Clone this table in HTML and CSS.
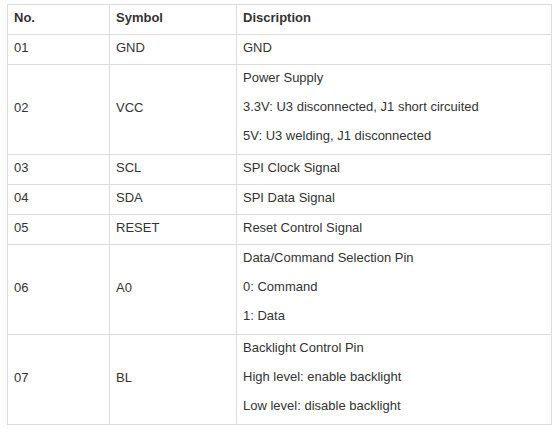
FILE: index.html
```html
<!DOCTYPE html>
<html>
<head>
<meta charset="utf-8">
<link rel="stylesheet" href="styles.css">
</head>
<body>
<div class="wrap">
<table class="pins">
  <colgroup>
    <col class="c-no">
    <col class="c-sym">
    <col class="c-desc">
  </colgroup>
  <thead>
    <tr><th>No.</th><th>Symbol</th><th>Discription</th></tr>
  </thead>
  <tbody>
    <tr><td>01</td><td>GND</td><td>GND</td></tr>
    <tr><td>02</td><td>VCC</td><td class="multi"><div class="ln">Power Supply</div><div class="ln">3.3V: U3 disconnected, J1 short circuited</div><div class="ln">5V: U3 welding, J1 disconnected</div></td></tr>
    <tr><td>03</td><td>SCL</td><td>SPI Clock Signal</td></tr>
    <tr><td>04</td><td>SDA</td><td>SPI Data Signal</td></tr>
    <tr><td>05</td><td>RESET</td><td>Reset Control Signal</td></tr>
    <tr><td>06</td><td>A0</td><td class="multi"><div class="ln">Data/Command Selection Pin</div><div class="ln">0: Command</div><div class="ln">1: Data</div></td></tr>
    <tr><td>07</td><td>BL</td><td class="multi"><div class="ln">Backlight Control Pin</div><div class="ln">High level: enable backlight</div><div class="ln">Low level: disable backlight</div></td></tr>
  </tbody>
</table>
</div>
</body>
</html>
```
FILE: styles.css
```css
html, body {
  margin: 0;
  padding: 0;
  background: #fff;
}
.wrap {
  padding: 4px 8px 0 7px;
}
.pins {
  width: 544px;
  border-collapse: collapse;
  table-layout: fixed;
  font-family: "Liberation Sans", Arial, sans-serif;
  font-size: 13px;
  color: #333;
  border: 1px solid #ddd;
}
.c-no { width: 102px; }
.c-sym { width: 127px; }
.c-desc { width: 315px; }
.pins th, .pins td {
  border: 1px solid #ddd;
  padding: 0 6px 4px;
  line-height: 25px;
  text-align: left;
  vertical-align: middle;
  white-space: nowrap;
}
.pins th {
  font-weight: bold;
}
.pins td.multi {
  padding-bottom: 4px;
}
.ln {
  line-height: 29px;
}
.ln:first-child {
  margin-top: -2px;
}
```
